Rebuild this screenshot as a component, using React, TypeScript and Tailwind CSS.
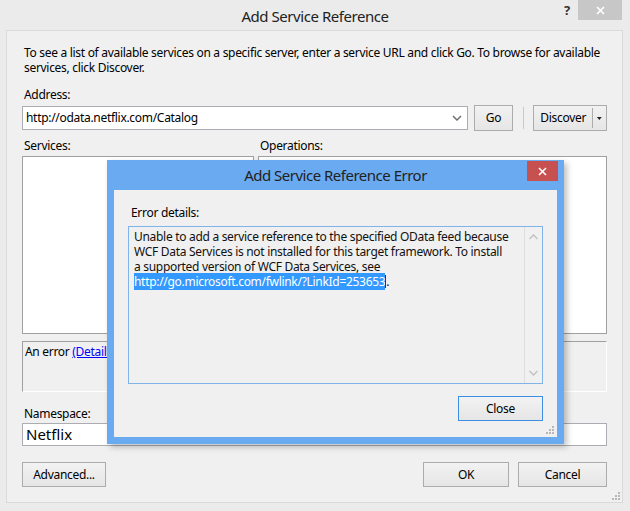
import { ReactNode } from "react";

function Btn({
  children,
  className = "",
  focused = false,
}: {
  children: ReactNode;
  className?: string;
  focused?: boolean;
}) {
  return (
    <div
      className={
        "flex items-center justify-center border bg-gradient-to-b from-[#f2f2f2] to-[#e6e6e6] text-[12px] text-black " +
        (focused ? "border-[#3c8de3]" : "border-[#acacac]") +
        " " +
        className
      }
    >
      {children}
    </div>
  );
}

function Grip() {
  return (
    <svg width="8" height="8" viewBox="0 0 8 8" className="block">
      <rect x="6" y="0" width="2" height="2" fill="#b8b8b8" />
      <rect x="3" y="3" width="2" height="2" fill="#b8b8b8" />
      <rect x="6" y="3" width="2" height="2" fill="#b8b8b8" />
      <rect x="0" y="6" width="2" height="2" fill="#b8b8b8" />
      <rect x="3" y="6" width="2" height="2" fill="#b8b8b8" />
      <rect x="6" y="6" width="2" height="2" fill="#b8b8b8" />
    </svg>
  );
}

function CloseX({ color = "#fff" }: { color?: string }) {
  return (
    <svg width="9" height="9" viewBox="0 0 9 9">
      <path d="M1 1 L8 8 M8 1 L1 8" stroke={color} strokeWidth="1.6" />
    </svg>
  );
}

function ErrorDialog() {
  return (
    <div className="absolute left-[107px] top-[160px] w-[457px] h-[284px] bg-[#6aaaf0] flex flex-col shadow-[3px_3px_6px_rgba(0,0,0,0.25)]">
      <div className="h-[30px] relative flex items-center justify-center">
        <span className="text-[15px] tracking-[-0.5px] text-[#222] mt-[1px]">Add Service Reference Error</span>
        <div className="absolute right-[6px] top-[1px] w-[31px] h-[20px] bg-[#c75050] flex items-center justify-center">
          <CloseX />
        </div>
      </div>
      <div className="mx-[7px] mb-[7px] flex-1 bg-[#f0f0f0] relative px-[14px] pt-[15px]">
        <div className="pl-[3px] leading-[15px]">Error details:</div>
        <div className="mt-[6px] h-[158px] border border-[#7eb4ea] flex">
          <div className="flex-1 px-[5px] pt-[2px] leading-[15px] text-[#111] whitespace-nowrap">
            Unable to add a service reference to the specified OData feed because
            <br />
            WCF Data Services is not installed for this target framework. To install
            <br />
            a supported version of WCF Data Services, see
            <br />
            <span className="bg-[#3399ff] text-white">http://go.microsoft.com/fwlink/?LinkId=253653</span>
            <span className="inline-block w-px h-[13px] bg-[#333] align-[-2px]" />.
          </div>
          <div className="w-[18px] border-l border-[#dedede] flex flex-col items-center justify-between py-[7px]">
            <svg width="9" height="6" viewBox="0 0 9 6">
              <path d="M0.5 5 L4.5 1 L8.5 5" stroke="#c2c2c2" strokeWidth="1.5" fill="none" />
            </svg>
            <svg width="9" height="6" viewBox="0 0 9 6">
              <path d="M0.5 1 L4.5 5 L8.5 1" stroke="#c2c2c2" strokeWidth="1.5" fill="none" />
            </svg>
          </div>
        </div>
        <div className="flex justify-end mt-[12px]">
          <Btn focused className="w-[85px] h-[25px]">
            Close
          </Btn>
        </div>
        <div className="absolute right-[3px] bottom-[3px]">
          <Grip />
        </div>
      </div>
    </div>
  );
}

export default function App() {
  return (
    <div className="relative w-[630px] h-[511px] overflow-hidden bg-[#ebebeb] font-['Segoe_UI','Noto_Sans',sans-serif] text-[12px] tracking-[-0.3px] text-black">
      {/* title bar */}
      <div className="h-[30px] grid grid-cols-[70px_1fr_70px]">
        <div />
        <div className="text-center text-[15px] tracking-[-0.45px] text-[#222] pt-[5px]">Add Service Reference</div>
        <div className="flex items-start justify-end pr-[8px]">
          <span className="text-[13px] font-bold text-[#333] mr-[8px] mt-[1px]">?</span>
          <div className="w-[44px] h-[20px] bg-[#c7c7c7] flex items-center justify-center">
            <CloseX />
          </div>
        </div>
      </div>

      {/* dialog body */}
      <div className="ml-[6px] mr-[7px] h-[473px] border border-[#dadada] bg-[#f0f0f0] px-[15px] pt-[14px] relative">
        <p className="leading-[15px] pl-[2px] whitespace-nowrap">
          To see a list of available services on a specific server, enter a service URL and click Go. To browse for available
          <br />
          services, click Discover.
        </p>

        <div className="mt-[12px] leading-[15px] pl-[2px]">Address:</div>
        <div className="mt-[3px] flex items-center h-[26px]">
          <div className="w-[446px] h-[24px] bg-white border border-[#abadb3] flex items-center pl-[3px] pr-[5px]">
            <span className="flex-1">http://odata.netflix.com/Catalog</span>
            <svg width="10" height="6" viewBox="0 0 10 6">
              <path d="M1 1 L5 5 L9 1" stroke="#707070" strokeWidth="1.5" fill="none" />
            </svg>
          </div>
          <Btn className="ml-[6px] w-[39px] h-[26px]">Go</Btn>
          <div className="ml-[10px] w-px h-[22px] bg-[#c9c9c9]" />
          <Btn className="ml-[9px] w-[74px] h-[26px] !justify-start">
            <span className="w-[60px] text-center">Discover</span>
            <span className="w-px h-[20px] bg-[#acacac]" />
            <svg width="13" height="6" viewBox="0 0 13 6">
              <path d="M4 2 L9 2 L6.5 5 Z" fill="#222" />
            </svg>
          </Btn>
        </div>

        <div className="mt-[7px] flex leading-[15px]">
          <div className="w-[236px] pl-[2px]">Services:</div>
          <div className="pl-[2px]">Operations:</div>
        </div>
        <div className="mt-[3px] flex gap-[4px] h-[178px]">
          <div className="w-[232px] bg-white border border-[#a0a0a0]" />
          <div className="flex-1 bg-white border border-[#a0a0a0]" />
        </div>

        <div className="mt-[7px] h-[51px] border border-t-[#a0a0a0] border-l-[#a0a0a0] border-r-white border-b-white pl-[2px] pt-[2px] leading-[15px]">
          An error <span className="text-[#0000ff] underline">(Details)</span>
        </div>

        <div className="mt-[14px] leading-[15px] pl-[2px]">Namespace:</div>
        <div className="mt-[2px] h-[23px] bg-white border border-[#abadb3] flex items-center pl-[3px] text-[15px] tracking-normal">
          Netflix
        </div>

        <div className="mt-[16px] flex items-center">
          <Btn className="w-[84px] h-[25px]">Advanced...</Btn>
          <div className="flex-1" />
          <Btn className="w-[86px] h-[25px]">OK</Btn>
          <Btn className="ml-[9px] w-[89px] h-[25px]">Cancel</Btn>
        </div>

        <div className="absolute right-[2px] bottom-[2px]">
          <Grip />
        </div>
      </div>

      <ErrorDialog />
    </div>
  );
}
